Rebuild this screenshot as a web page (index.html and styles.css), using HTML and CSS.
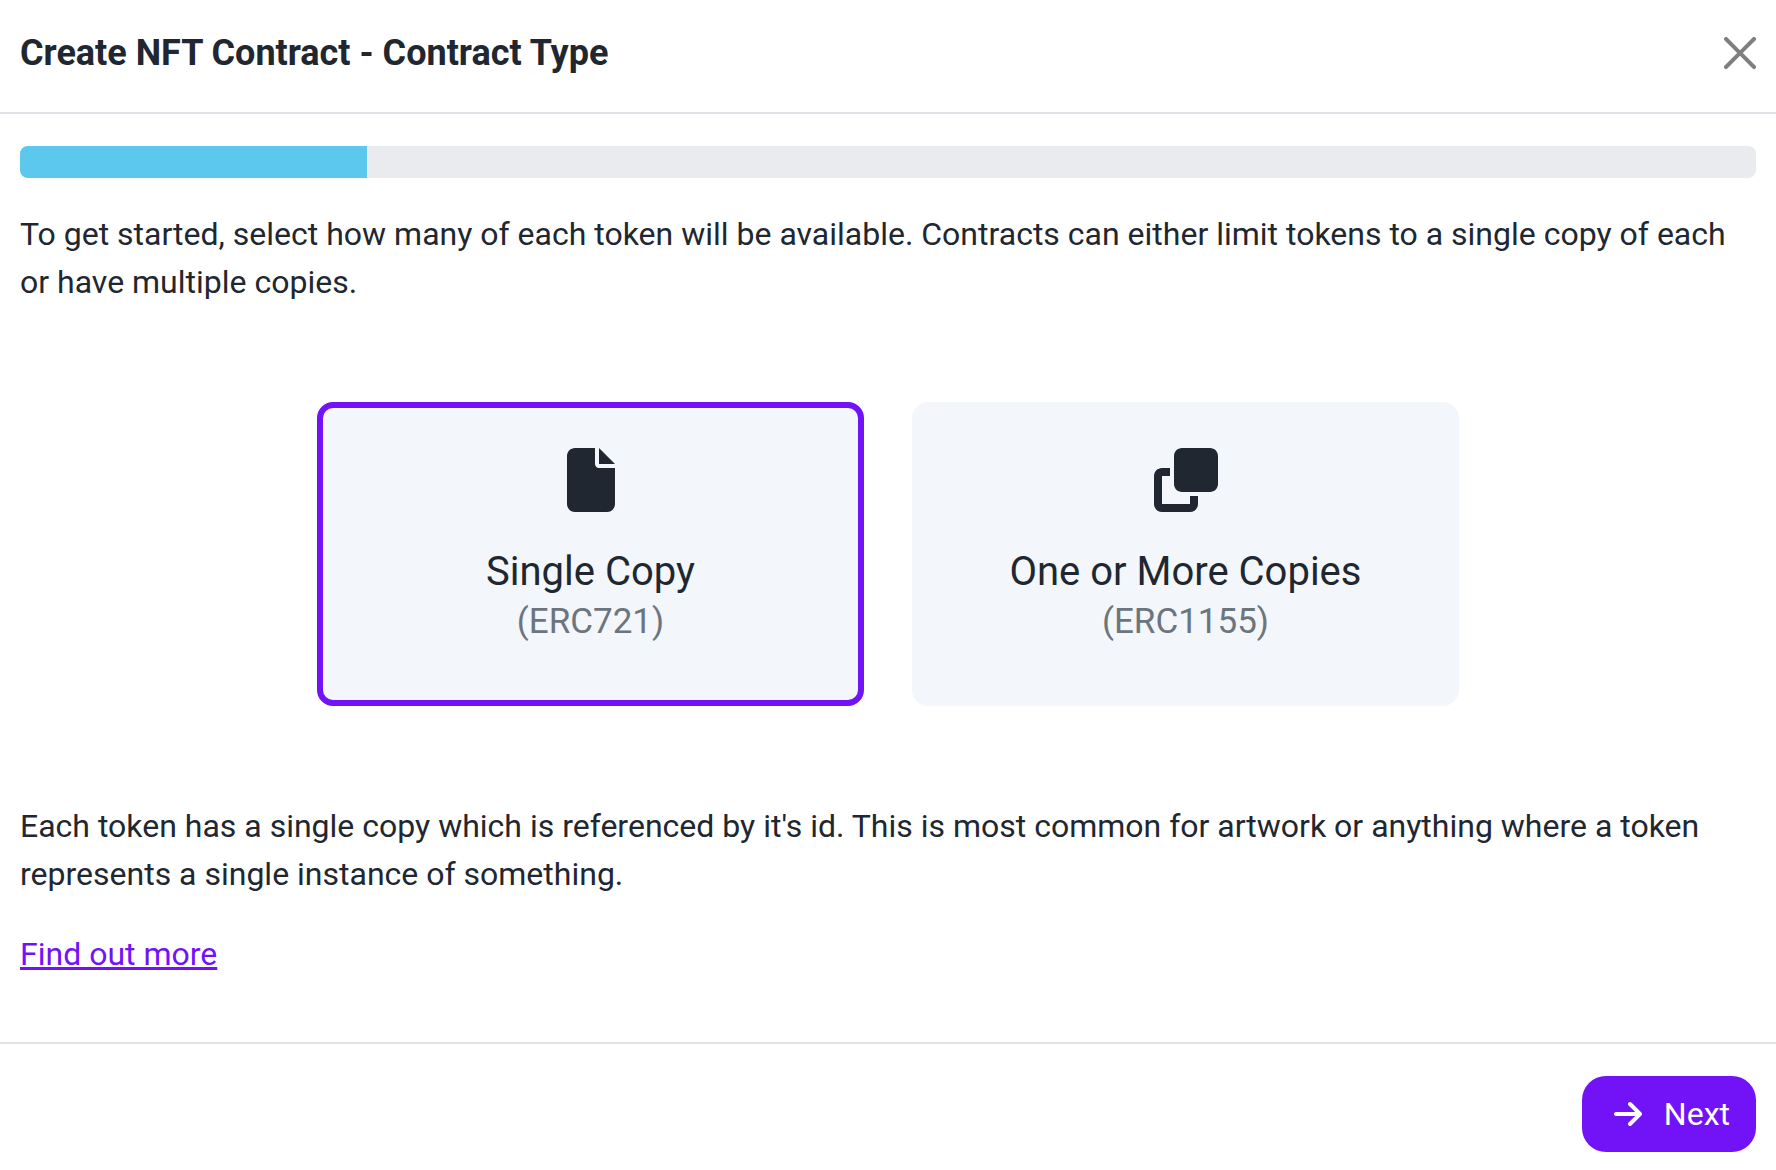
FILE: index.html
```html
<!DOCTYPE html>
<html lang="en">

<head>
    <meta charset="utf-8">
    <meta name="viewport" content="width=device-width, initial-scale=1">
    <title>Create NFT Contract</title>
    <link rel="stylesheet" href="styles.css">
</head>

<body>
    <form class="modal">
        <header class="modal-header">
            <h1 class="modal-title">Create NFT Contract - Contract Type</h1>
            <button type="button" class="btn-close" aria-label="Close">
                <svg viewBox="0 0 16 16" aria-hidden="true"><path d="M.293.293a1 1 0 0 1 1.414 0L8 6.586 14.293.293a1 1 0 1 1 1.414 1.414L9.414 8l6.293 6.293a1 1 0 0 1-1.414 1.414L8 9.414l-6.293 6.293a1 1 0 0 1-1.414-1.414L6.586 8 .293 1.707a1 1 0 0 1 0-1.414z"/></svg>
            </button>
        </header>

        <main class="modal-body">
            <div class="progress" role="progressbar" aria-label="Steps completed" aria-valuenow="20" aria-valuemin="0" aria-valuemax="100">
                <div class="progress-bar" style="width: 20%"></div>
            </div>

            <p>To get started, select how many of each token will be available. Contracts can either limit tokens to a single copy of each or have multiple copies.</p>

            <div class="options" role="radiogroup" aria-label="Contract type">
                <label class="option">
                    <input type="radio" name="contractType" value="erc721" checked>
                    <svg class="option-icon" viewBox="0 0 384 512" aria-hidden="true"><path d="M0 64C0 28.7 28.7 0 64 0H224V128c0 17.7 14.3 32 32 32H384V448c0 35.3-28.7 64-64 64H64c-35.3 0-64-28.7-64-64V64zm384 64H256V0L384 128z"/></svg>
                    <span class="option-name">Single Copy</span>
                    <span class="option-type">(ERC721)</span>
                </label>
                <label class="option">
                    <input type="radio" name="contractType" value="erc1155">
                    <svg class="option-icon" viewBox="0 0 512 512" aria-hidden="true"><path d="M288 448H64V224h64V160H64c-35.3 0-64 28.7-64 64V448c0 35.3 28.7 64 64 64H288c35.3 0 64-28.7 64-64V384H288v64zm-64-96H448c35.3 0 64-28.7 64-64V64c0-35.3-28.7-64-64-64H224c-35.3 0-64 28.7-64 64V288c0 35.3 28.7 64 64 64z"/></svg>
                    <span class="option-name">One or More Copies</span>
                    <span class="option-type">(ERC1155)</span>
                </label>
            </div>

            <p>Each token has a single copy which is referenced by it's id. This is most common for artwork or anything where a token represents a single instance of something.</p>
            <p><a href="#">Find out more</a></p>
        </main>

        <footer class="modal-footer">
            <button type="submit" class="btn-next">
                <svg viewBox="0 0 448 512" aria-hidden="true"><path d="M438.6 278.6c12.5-12.5 12.5-32.8 0-45.3l-160-160c-12.5-12.5-32.8-12.5-45.3 0s-12.5 32.8 0 45.3L338.8 224 32 224c-17.7 0-32 14.3-32 32s14.3 32 32 32l306.7 0L233.4 393.4c-12.5 12.5-12.5 32.8 0 45.3s32.8 12.5 45.3 0l160-160z"/></svg>
                Next
            </button>
        </footer>
    </form>
</body>

</html>
```

FILE: styles.css
```css
* {
    box-sizing: border-box;
}

body {
    font-family: Roboto, "Liberation Sans", sans-serif;
    font-size: 32px;
    line-height: 48px;
    margin: 0;
    color: #212730;
    background-color: #fff;
}

p {
    margin: 0 0 32px;
}

a {
    color: #7112f7;
}

/* Header */
.modal-header {
    display: flex;
    align-items: center;
    justify-content: space-between;
    padding: 29px 20px 35px;
    border-bottom: 2px solid #dee2e6;
}

.modal-title {
    margin: 0;
    font-size: 36px;
    font-weight: bold;
    line-height: 48px;
}

.btn-close {
    display: flex;
    padding: 0;
    border: none;
    background: none;
    cursor: pointer;
}

.btn-close svg {
    width: 32px;
    height: 32px;
    fill: #7f7f7f;
}

/* Body */
.modal-body {
    padding: 32px 20px;
}

.progress {
    height: 32px;
    margin-bottom: 32px;
    overflow: hidden;
    background-color: #e9ebef;
    border-radius: 8px;
}

.progress-bar {
    height: 100%;
    background-color: #5cc8ed;
}

/* Contract type cards */
.options {
    display: grid;
    grid-template-columns: 1fr 1fr;
    gap: 48px;
    max-width: 1142px;
    margin: 96px auto;
}

.option {
    display: flex;
    flex-direction: column;
    align-items: center;
    padding: 40px 40px 52px;
    border: 6px solid #f3f6fb;
    border-radius: 16px;
    background-color: #f3f6fb;
    text-align: center;
    cursor: pointer;
}

.option input {
    position: absolute;
    opacity: 0;
}

.option:has(input:checked) {
    border-color: #7112f7;
}

.option-icon {
    height: 64px;
    margin-bottom: 36px;
    fill: #212730;
}

.option-name {
    font-size: 40px;
}

.option-type {
    font-size: 35px;
    line-height: 52px;
    color: #6c757d;
}

/* Footer */
.modal-footer {
    display: flex;
    justify-content: flex-end;
    padding: 32px 20px 16px;
    border-top: 2px solid #dee2e6;
}

.btn-next {
    display: flex;
    align-items: center;
    gap: 22px;
    padding: 14px 26px 14px 32px;
    border: none;
    border-radius: 24px;
    background-color: #7112f7;
    color: #fff;
    font-family: inherit;
    font-size: 32px;
    line-height: 48px;
    cursor: pointer;
}

.btn-next svg {
    height: 32px;
    fill: #fff;
}
```
